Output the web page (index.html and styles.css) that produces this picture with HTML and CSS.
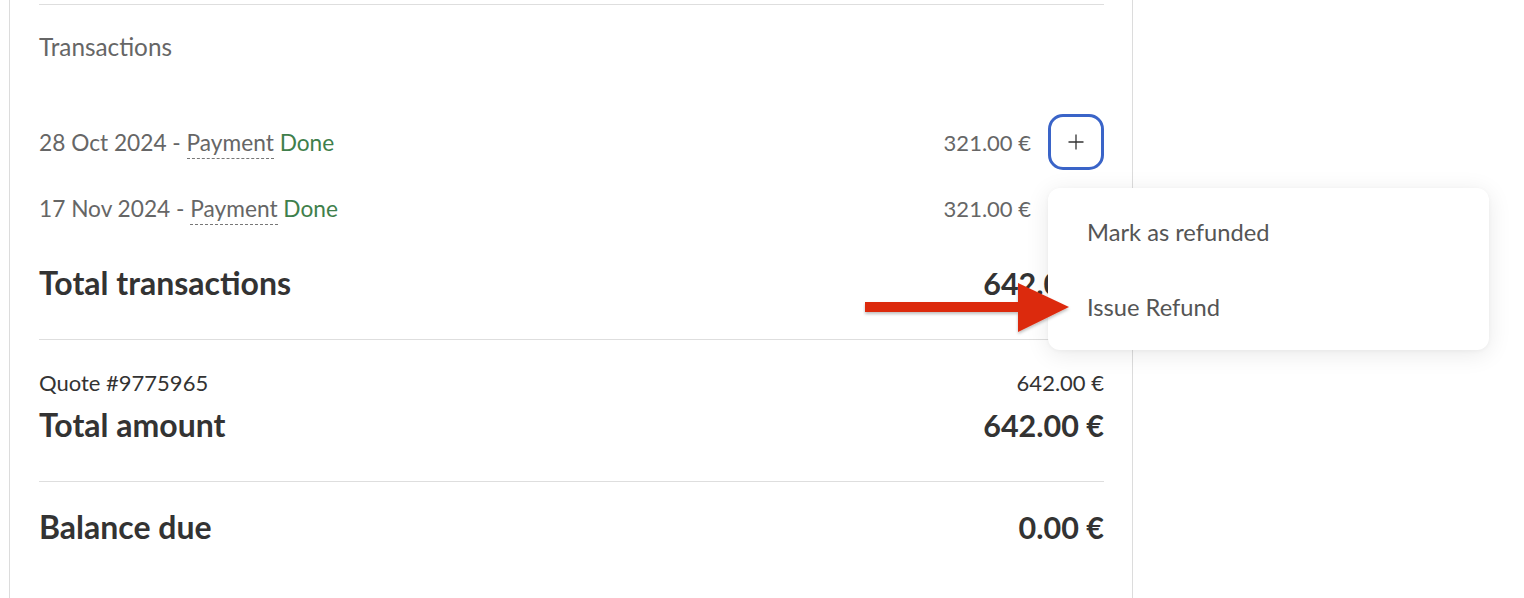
FILE: index.html
```html
<!DOCTYPE html>
<html lang="en">
<head>
<meta charset="utf-8">
<title>Transactions</title>
<link rel="stylesheet" href="styles.css">
</head>
<body>
<div class="page">
  <div class="panel">
    <section class="section section-tx">
      <div class="section-title">Transactions</div>

      <div class="tx-row tx-row-first">
        <div class="tx-label">28 Oct 2024 - <span class="dotted">Payment</span> <span class="done">Done</span></div>
        <div class="tx-amount">321.00 €</div>
        <div class="tx-action">
          <button class="plus-btn" type="button" aria-label="Actions">
            <svg width="16" height="16" viewBox="0 0 16 16" aria-hidden="true">
              <path d="M8 0.5V15.5M0.5 8H15.5" stroke="#333" stroke-width="1.3" fill="none"/>
            </svg>
          </button>
          <div class="menu">
            <div class="menu-item">Mark as refunded</div>
            <div class="menu-item">Issue Refund</div>
          </div>
          <svg class="arrow" width="215" height="56" viewBox="0 0 215 56" aria-hidden="true">
            <defs>
              <filter id="sh" x="-10%" y="-20%" width="120%" height="160%">
                <feDropShadow dx="0" dy="2" stdDeviation="1.5" flood-color="#000" flood-opacity="0.25"/>
              </filter>
            </defs>
            <g filter="url(#sh)">
              <rect x="2" y="20" width="156" height="10" fill="#dc2a0c"/>
              <polygon points="155,1 155,50 206,25" fill="#dc2a0c"/>
            </g>
          </svg>
        </div>
      </div>

      <div class="tx-row">
        <div class="tx-label">17 Nov 2024 - <span class="dotted">Payment</span> <span class="done">Done</span></div>
        <div class="tx-amount">321.00 €</div>
        <div class="tx-action"></div>
      </div>

      <div class="total-row">
        <div class="total-label">Total transactions</div>
        <div class="total-value">642.00 €</div>
      </div>
    </section>

    <section class="section section-quote">
      <div class="quote-row">
        <div>Quote #9775965</div>
        <div>642.00 €</div>
      </div>
      <div class="total-row total-amount">
        <div class="total-label">Total amount</div>
        <div class="total-value">642.00 €</div>
      </div>
    </section>

    <section class="section section-balance">
      <div class="total-row">
        <div class="total-label">Balance due</div>
        <div class="total-value">0.00 €</div>
      </div>
    </section>
  </div>
</div>
</body>
</html>
```
FILE: styles.css
```css
* { box-sizing: border-box; }

html, body {
  margin: 0;
  padding: 0;
  background: #fff;
  height: 100%;
  overflow: hidden;
}

body {
  font-family: "Lato", "Liberation Sans", sans-serif;
  color: #333;
}

.page {
  padding-left: 9px;
  height: 100%;
}

.panel {
  width: 1124px;
  height: 100%;
  border-left: 1px solid #dcdcdc;
  border-right: 1px solid #dcdcdc;
  padding: 4px 28px 0 29px;
}

.section {
  border-top: 1px solid #dedede;
}

.section-tx {
  padding: 27px 0 35px;
}

.section-title {
  font-size: 24.3px;
  line-height: 30px;
  color: #666;
}

.tx-row {
  display: flex;
  align-items: center;
  height: 40px;
  margin-top: 18px;
  font-size: 22.7px;
  color: #666;
}

.tx-row-first {
  height: 56px;
  margin-top: 52px;
}

.tx-label {
  flex: 1;
  white-space: nowrap;
}

.dotted {
  border-bottom: 1px dashed #777;
  padding-bottom: 2px;
}

.done {
  color: #3f7f4c;
}

.tx-amount {
  white-space: nowrap;
  font-size: 22px;
}

.tx-action {
  width: 56px;
  height: 56px;
  margin-left: 17px;
  position: relative;
  flex: none;
}

.tx-row:not(.tx-row-first) .tx-action {
  height: 40px;
}

.plus-btn {
  width: 56px;
  height: 56px;
  border: 3px solid #3a64c8;
  border-radius: 15px;
  background: #fff;
  padding: 0;
  display: flex;
  align-items: center;
  justify-content: center;
  cursor: pointer;
}

.menu {
  position: absolute;
  left: 0;
  top: 74px;
  width: 441px;
  padding: 6px 0;
  background: #fff;
  border-radius: 12px;
  box-shadow: 0 4px 24px rgba(0, 0, 0, 0.09), 0 1px 4px rgba(0, 0, 0, 0.04);
  z-index: 2;
}

.menu-item {
  height: 75px;
  display: flex;
  align-items: center;
  padding-left: 39px;
  font-size: 23.7px;
  color: #555;
}

.arrow {
  position: absolute;
  left: -185px;
  top: 168px;
  z-index: 3;
}

.total-row {
  display: flex;
  align-items: center;
  justify-content: space-between;
  height: 40px;
  margin-top: 36px;
  padding-bottom: 3px;
  font-size: 32px;
  font-weight: 700;
  color: #333;
}

.total-value {
  font-size: 30.5px;
}

.section-quote {
  padding: 28px 0 35px;
}

.quote-row {
  display: flex;
  justify-content: space-between;
  align-items: center;
  height: 28px;
  font-size: 22px;
  color: #333;
}

.total-amount {
  margin-top: 10px;
}

.section-balance {
  padding-top: 26px;
}

.section-balance .total-row {
  margin-top: 0;
}
```
